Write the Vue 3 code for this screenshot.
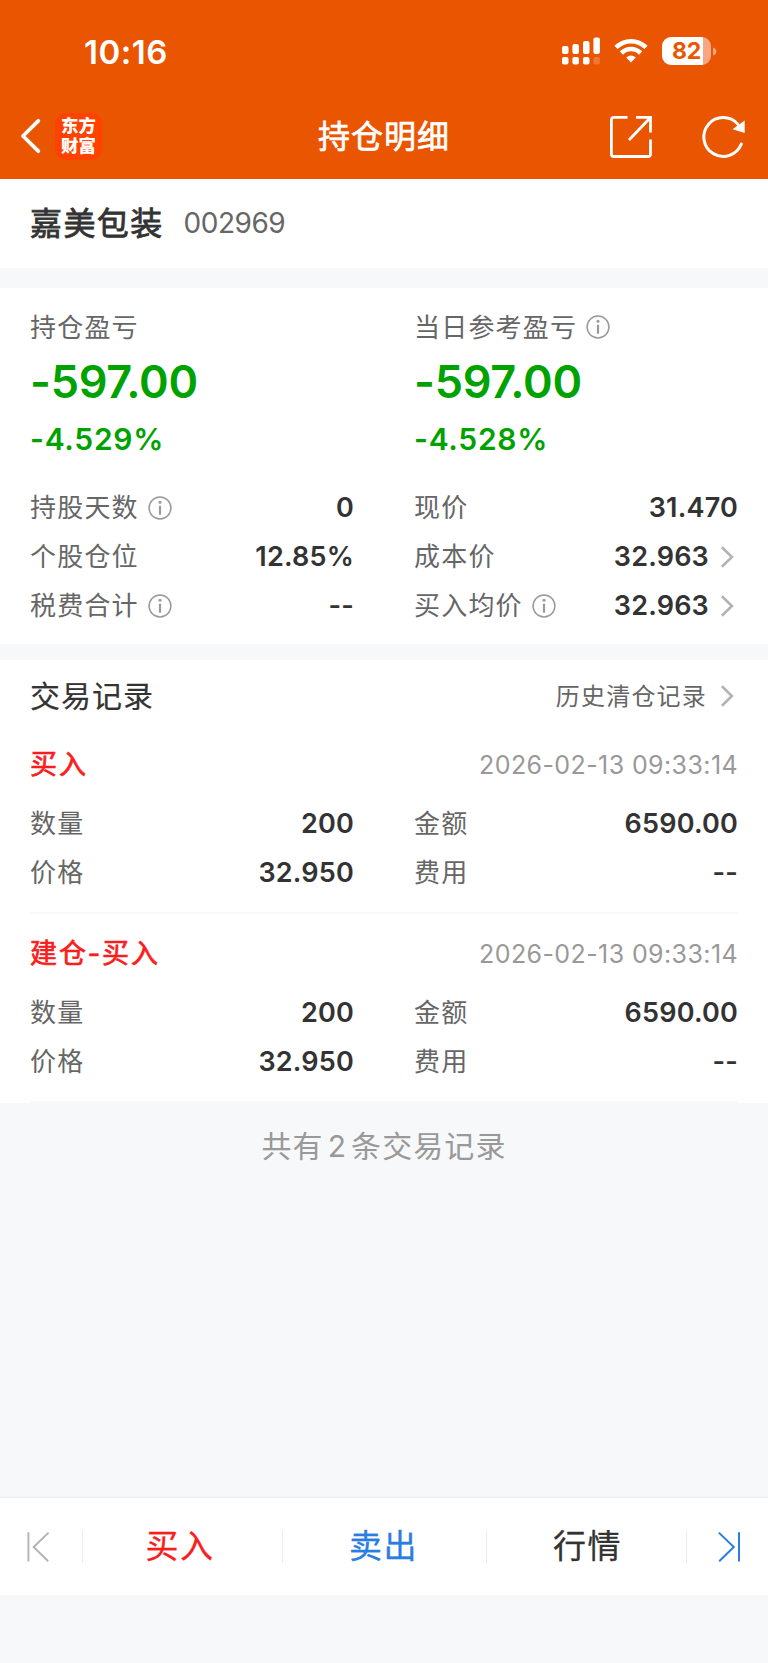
<script setup>
const summaries = [
  { label: '持仓盈亏', info: false, amount: '-597.00', percent: '-4.529%' },
  { label: '当日参考盈亏', info: true, amount: '-597.00', percent: '-4.528%' },
]

const metrics = [
  { label: '持股天数', info: true, value: '0' },
  { label: '现价', value: '31.470' },
  { label: '个股仓位', value: '12.85%' },
  { label: '成本价', value: '32.963', link: true },
  { label: '税费合计', info: true, value: '--' },
  { label: '买入均价', info: true, value: '32.963', link: true },
]

const fields = [
  { label: '数量', value: '200' },
  { label: '金额', value: '6590.00' },
  { label: '价格', value: '32.950' },
  { label: '费用', value: '--' },
]

const records = [
  { type: '买入', time: '2026-02-13 09:33:14', fields },
  { type: '建仓-买入', time: '2026-02-13 09:33:14', fields },
]
</script>

<template>
  <div class="page">
    <header class="header">
      <div class="status">
        <span class="clock">10:16</span>
        <svg class="signal" width="38" height="28" viewBox="0 0 38 28" fill="#fff">
          <rect x="0" y="9" width="6.5" height="8" rx="2" />
          <rect x="10.4" y="7" width="6.5" height="10" rx="2" />
          <rect x="21" y="4" width="6.5" height="13" rx="2" />
          <rect x="31.4" y="0.5" width="6.5" height="16.5" rx="2" />
          <rect x="0" y="20" width="6.5" height="7.6" rx="2" />
          <rect x="10.4" y="20" width="6.5" height="7.6" rx="2" />
          <rect x="21" y="20" width="6.5" height="7.6" rx="2" />
          <rect x="31.4" y="20" width="6.5" height="7.6" rx="2" opacity="0.2" />
        </svg>
        <svg class="wifi" width="34" height="26" viewBox="0 0 34 26" fill="none" stroke="#fff">
          <path d="M2 9.4C10.5 1.1 23.5 1.1 32 9.4" stroke-width="4.6" />
          <path d="M7.3 15C12.8 9.6 21.2 9.6 26.7 15" stroke-width="4.6" />
          <path d="M12.2 19.6Q17 15.2 21.8 19.6L17 24.6Z" fill="#fff" stroke="none" />
        </svg>
        <div class="battery">
          <div class="cell"><span>82</span></div>
          <svg width="4" height="9" viewBox="0 0 4 9"><path d="M0 0.5Q3.4 1.6 3.4 4.5T0 8.5Z" fill="#f6a782" /></svg>
        </div>
      </div>
      <nav class="nav">
        <div class="side">
          <svg width="22" height="38" viewBox="0 0 22 38" fill="none" stroke="#fff" stroke-width="3.8" stroke-linecap="round" stroke-linejoin="round">
            <path d="M18.3 2.8L3 18L18.3 33.2" />
          </svg>
          <div class="logo">东方<br />财富</div>
        </div>
        <h1>持仓明细</h1>
        <div class="side right">
          <svg width="44" height="44" viewBox="0 0 44 44" fill="none" stroke="#fff" stroke-width="2.8">
            <path d="M18.5 2.4H5Q2.4 2.4 2.4 5V38.9Q2.4 41.5 5 41.5H38.9Q41.5 41.5 41.5 38.9V24.5" />
            <path d="M27 2.4H41.5V17.5M41 3L20 25" />
          </svg>
          <svg width="46" height="46" viewBox="0 0 46 46">
            <path d="M40.3 30A19.4 19.4 0 1 1 37 10.4" fill="none" stroke="#fff" stroke-width="3" stroke-linecap="round" />
            <path d="M43.7 6.5V19L31.5 15.2Z" fill="#fff" />
          </svg>
        </div>
      </nav>
    </header>

    <section class="stock">
      <span class="name">嘉美包装</span>
      <span class="code">002969</span>
    </section>

    <section class="position">
      <div class="columns">
        <div v-for="s in summaries" :key="s.label" class="summary">
          <div class="label">
            {{ s.label }}
            <svg v-if="s.info" class="info" viewBox="0 0 24 24"><circle cx="12" cy="12" r="10.9" /><path d="M12 9.7V18.7" /><circle class="dot" cx="12" cy="6.2" r="1.5" /></svg>
          </div>
          <div class="amount">{{ s.amount }}</div>
          <div class="percent">{{ s.percent }}</div>
        </div>
      </div>
      <div class="columns metrics">
        <div v-for="m in metrics" :key="m.label" class="row">
          <div class="label">
            {{ m.label }}
            <svg v-if="m.info" class="info" viewBox="0 0 24 24"><circle cx="12" cy="12" r="10.9" /><path d="M12 9.7V18.7" /><circle class="dot" cx="12" cy="6.2" r="1.5" /></svg>
          </div>
          <div class="value">
            {{ m.value }}
            <svg v-if="m.link" class="chevron" viewBox="0 0 14 22"><path d="M0.9 1.3L10.9 11L0.9 20.7" /></svg>
          </div>
        </div>
      </div>
    </section>

    <section class="trades">
      <div class="trades-head">
        <h2>交易记录</h2>
        <div class="history">
          <span>历史清仓记录</span>
          <svg class="chevron" viewBox="0 0 14 22"><path d="M0.9 1.3L10.9 11L0.9 20.7" /></svg>
        </div>
      </div>
      <article v-for="r in records" :key="r.type" class="record">
        <div class="record-head">
          <span class="type">{{ r.type }}</span>
          <time>{{ r.time }}</time>
        </div>
        <div class="columns">
          <div v-for="f in r.fields" :key="f.label" class="row">
            <div class="label">{{ f.label }}</div>
            <div class="value">{{ f.value }}</div>
          </div>
        </div>
      </article>
    </section>

    <div class="total">共有<span>2</span>条交易记录</div>

    <footer class="actions">
      <div class="edge first">
        <svg width="24" height="32" viewBox="0 0 24 32" fill="none" stroke="#b3b3b3" stroke-width="1.9"><path d="M2.4 1.2V30.4M22.6 1.6L7.6 16L22.2 30.2" /></svg>
      </div>
      <div class="action buy">买入</div>
      <div class="action sell">卖出</div>
      <div class="action quote">行情</div>
      <div class="edge last">
        <svg width="24" height="32" viewBox="0 0 24 32" fill="none" stroke="#2a7de1" stroke-width="2"><path d="M22 1.2V30.4M1.8 1.6L16.8 16L2.2 30.2" /></svg>
      </div>
    </footer>
  </div>
</template>

<style>
body {
  margin: 0;
  background: #f6f8fa;
}
</style>

<style scoped>
* {
  box-sizing: border-box;
}
.page {
  width: 768px;
  height: 1663px;
  display: flex;
  flex-direction: column;
  background: #f6f8fa;
  font-family: 'Noto Sans CJK SC', sans-serif;
  color: #333;
  white-space: nowrap;
  overflow: hidden;
}
svg {
  display: block;
  flex: none;
}
h1,
h2 {
  margin: 0;
}
.header {
  height: 179px;
  background: #ea5502;
  color: #fff;
}
.status {
  height: 94px;
  padding: 8px 51px 0 84px;
  display: flex;
  align-items: center;
}
.clock {
  padding-top: 1px;
  font: 600 33px/40px Inter, sans-serif;
  letter-spacing: 0.5px;
}
.signal {
  margin-left: auto;
}
.wifi {
  margin-left: 14px;
}
.battery {
  margin-left: 14px;
  display: flex;
  align-items: center;
  gap: 2px;
}
.cell {
  width: 49px;
  height: 28px;
  border-radius: 9px;
  background: linear-gradient(90deg, #fff 41px, #f6a782 41px);
  display: flex;
  padding-left: 10px;
}
.cell span {
  font: 700 23px/28px Inter, sans-serif;
  color: #ea5502;
  letter-spacing: -0.1px;
}
.nav {
  height: 85px;
  padding: 0 21px 0 20px;
  display: grid;
  grid-template-columns: 1fr auto 1fr;
  align-items: center;
}
.side {
  display: flex;
  align-items: center;
}
.right {
  justify-content: flex-end;
  gap: 48px;
}
.logo {
  width: 47px;
  height: 47px;
  margin-left: 13px;
  margin-top: -1px;
  padding-top: 2px;
  border-radius: 10px;
  background: #ff4200;
  text-align: center;
  font-size: 17.4px;
  line-height: 20px;
  font-weight: 900;
}
h1 {
  padding: 0 0 5px 1px;
  font-size: 32px;
  line-height: 40px;
  font-weight: 400;
  letter-spacing: 1px;
  -webkit-text-stroke: 0.7px currentColor;
}
.stock {
  height: 89px;
  padding: 0 30px;
  display: flex;
  align-items: center;
  background: #fff;
}
.name {
  padding-bottom: 5px;
  font-size: 32px;
  line-height: 40px;
  font-weight: 400;
  letter-spacing: 1.4px;
  -webkit-text-stroke: 0.8px currentColor;
}
.code {
  margin-left: 20px;
  padding-bottom: 2px;
  font: 400 28px/40px Inter, sans-serif;
  letter-spacing: -0.5px;
  color: #666;
}
.position {
  height: 356px;
  margin-top: 20px;
  padding: 18px 30px 0;
  background: #fff;
}
.columns {
  display: grid;
  grid-template-columns: 324px 324px;
  column-gap: 60px;
}
.label {
  display: flex;
  align-items: center;
  font-size: 26px;
  line-height: 40px;
  letter-spacing: 1.2px;
  color: #666;
}
.info {
  width: 24px;
  height: 24px;
  margin: 2px 0 0 9px;
  fill: none;
  stroke: #999;
  stroke-width: 1.5;
}
.info path {
  stroke-width: 2.2;
}
.info .dot {
  fill: #999;
  stroke: none;
}
.amount {
  margin-top: 7px;
  font: 600 45px/58px Inter, sans-serif;
  letter-spacing: -0.3px;
  color: #00a200;
}
.percent {
  margin-top: 8px;
  font: 600 30px/40px Inter, sans-serif;
  letter-spacing: 0.7px;
  color: #00a200;
}
.metrics {
  margin-top: 24px;
}
.row {
  height: 49px;
  display: flex;
  align-items: center;
  justify-content: space-between;
}
.row .label {
  padding-bottom: 3px;
}
.row .info {
  margin-top: 4px;
}
.value {
  display: flex;
  align-items: center;
  font: 600 27px/40px Inter, sans-serif;
  letter-spacing: 0.2px;
}
.chevron {
  width: 14px;
  height: 22px;
  margin: 0 3px 0 12px;
  fill: none;
  stroke: #b3b3b3;
  stroke-width: 2.6;
}
.trades {
  margin-top: 16px;
  background: #fff;
}
.trades-head {
  height: 65px;
  padding: 7px 30px 0;
  display: flex;
  align-items: center;
  justify-content: space-between;
}
h2 {
  padding-bottom: 4px;
  font-size: 30px;
  line-height: 40px;
  font-weight: 400;
  letter-spacing: 1px;
  -webkit-text-stroke: 0.2px currentColor;
}
.history {
  display: flex;
  align-items: center;
  font-size: 24px;
  line-height: 40px;
  letter-spacing: 1.2px;
  color: #666;
}
.history span {
  padding: 0 2px 3px 0;
}
.record {
  height: 189px;
  margin: 0 30px;
  padding-top: 14px;
  border-bottom: 2px solid #f8f9fa;
}
.record-head {
  height: 52px;
  margin-bottom: 8px;
  display: flex;
  align-items: center;
  justify-content: space-between;
}
.type {
  font-family: Inter, 'Noto Sans CJK SC', sans-serif;
  font-size: 27px;
  line-height: 40px;
  letter-spacing: 1.9px;
  -webkit-text-stroke: 0.7px currentColor;
  color: #f91e1e;
}
time {
  padding-bottom: 1px;
  font: 400 25px/40px Inter, sans-serif;
  letter-spacing: 0.4px;
  color: #999;
}
.total {
  margin-top: 21px;
  text-align: center;
  font-size: 30px;
  line-height: 40px;
  letter-spacing: 1.1px;
  color: #999;
}
.total span {
  margin: 0 4px;
  font-family: Inter, sans-serif;
}
.actions {
  height: 98px;
  margin-top: auto;
  margin-bottom: 68px;
  border-top: 1px solid #eee;
  background: #fff;
  display: flex;
  align-items: center;
}
.edge {
  height: 33px;
  display: flex;
  align-items: center;
}
.first {
  width: 83px;
  padding-left: 26px;
  border-right: 1px solid #ececec;
}
.last {
  width: 81px;
  padding-left: 30px;
}
.action {
  height: 33px;
  border-right: 1px solid #ececec;
  text-align: center;
  font-size: 33px;
  line-height: 28px;
  letter-spacing: 1.4px;
  -webkit-text-stroke: 0.3px currentColor;
}
.buy {
  width: 200px;
  padding-right: 5px;
  color: #f91e1e;
}
.sell {
  width: 204px;
  padding-right: 2px;
  color: #2a7de1;
}
.quote {
  width: 200px;
  padding-left: 2px;
}
</style>
